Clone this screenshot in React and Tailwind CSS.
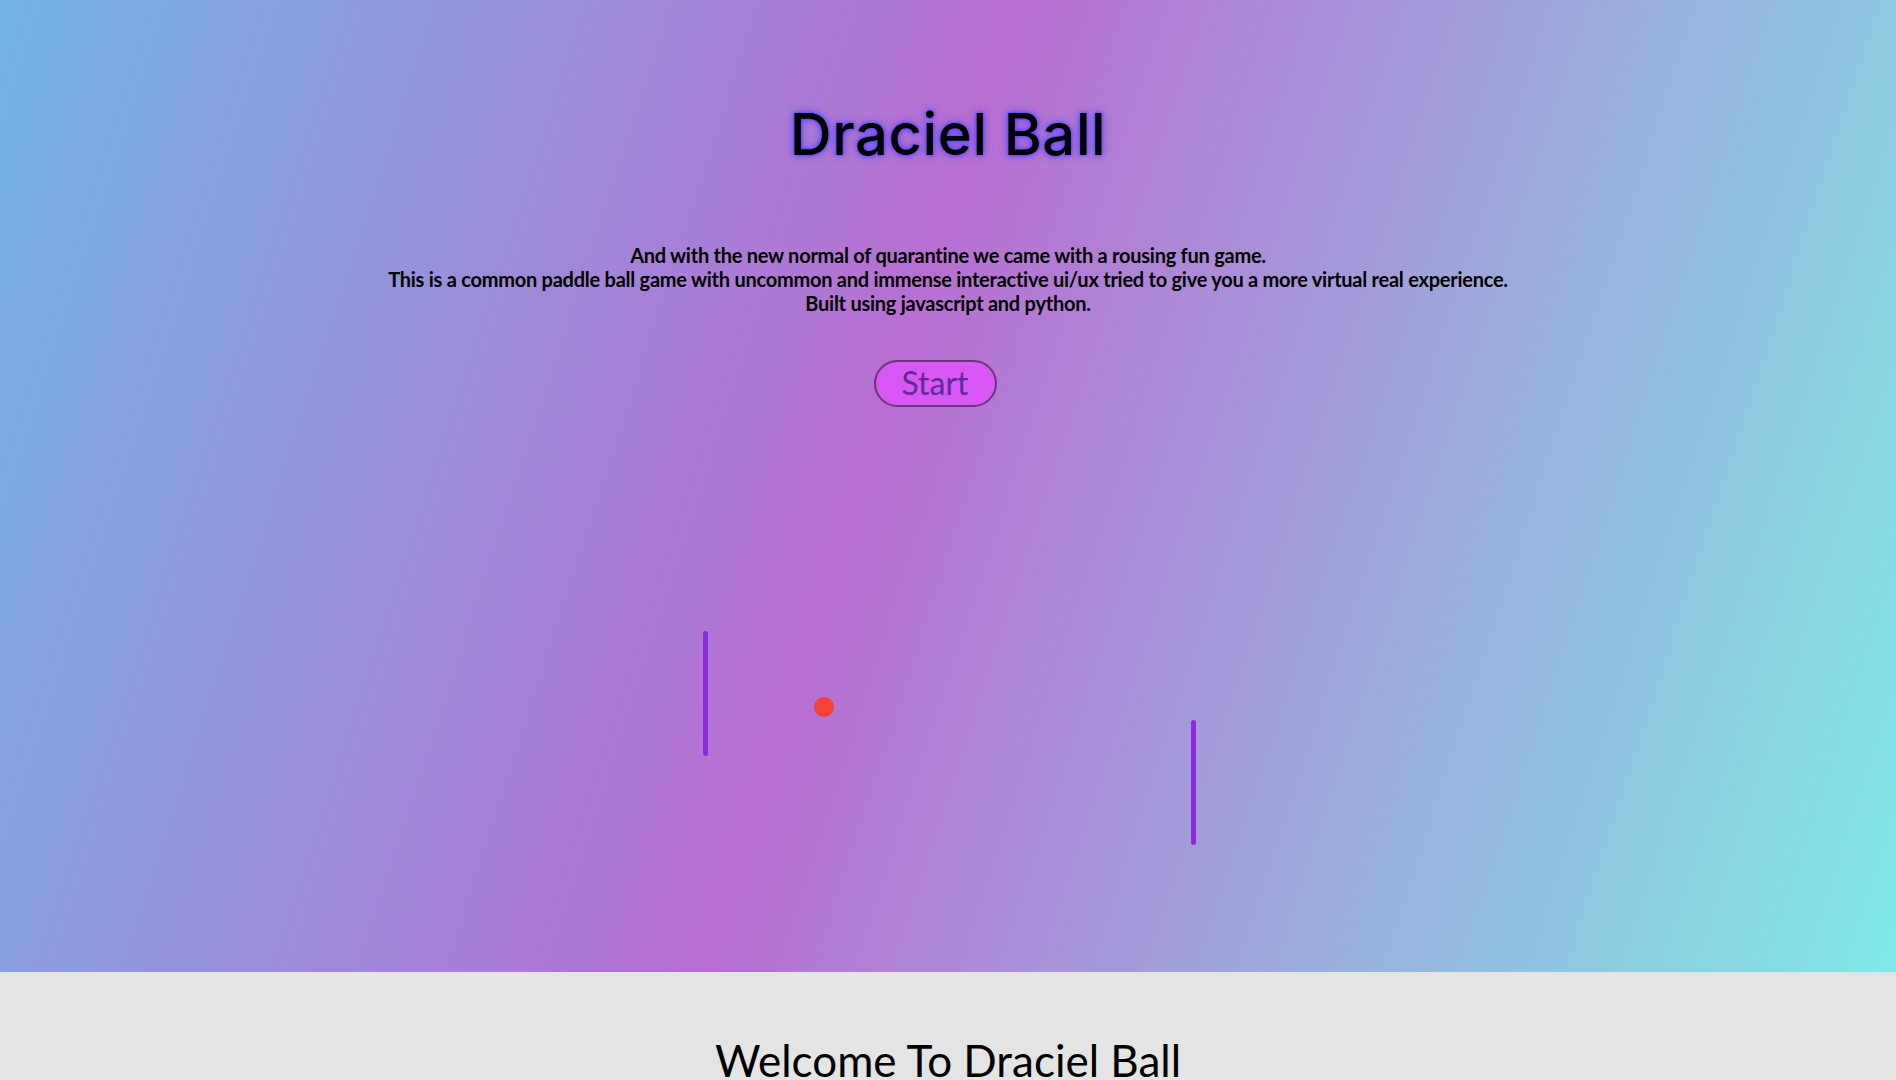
export default function App() {
  return (
    <div className="min-h-screen w-full bg-[#e4e4e4] font-['Lato',sans-serif] text-black">
      <section className="flex h-[972px] w-full flex-col items-center bg-[linear-gradient(108deg,#73b4e4_0%,#b86fd2_46%,#7fe9e6_100%)]">
        <h1 className="pt-[99px] font-['Inter',sans-serif] text-[58px] font-medium leading-[70px] tracking-[0.6px] text-black [text-shadow:0_0_8px_#4a3dff,0_0_3px_#4a3dff]">
          Draciel Ball
        </h1>

        <p className="mt-[74px] text-center text-[20px] font-bold leading-[24px] tracking-[-0.25px]">
          And with the new normal of quarantine we came with a rousing fun game.
          <br />
          This is a common paddle ball game with uncommon and immense interactive ui/ux tried to give you a more virtual real experience.
          <br />
          Built using javascript and python.
        </p>

        <button className="mt-[45px] -ml-[26px] flex h-[47px] w-[123px] items-center justify-center rounded-full border-2 border-[#6b3678] bg-[#d957f4] pb-[2px] text-[32px] text-[#5f2c96]">
          Start
        </button>

        {/* game board */}
        <div className="relative mt-[43px] h-[450px] w-[600px]">
          <div className="absolute left-[55px] top-[181px] h-[125px] w-[5px] rounded-full bg-[#8a2be2]" />
          <div className="absolute left-[166px] top-[247px] h-[20px] w-[20px] rounded-full bg-[#f44330]" />
          <div className="absolute left-[543px] top-[270px] h-[125px] w-[5px] rounded-full bg-[#8a2be2]" />
        </div>
      </section>

      <section className="flex w-full flex-col items-center pt-[62px] pb-[80px]">
        <h2 className="text-[44px] font-normal leading-[52px]">Welcome To Draciel Ball</h2>
      </section>
    </div>
  )
}
